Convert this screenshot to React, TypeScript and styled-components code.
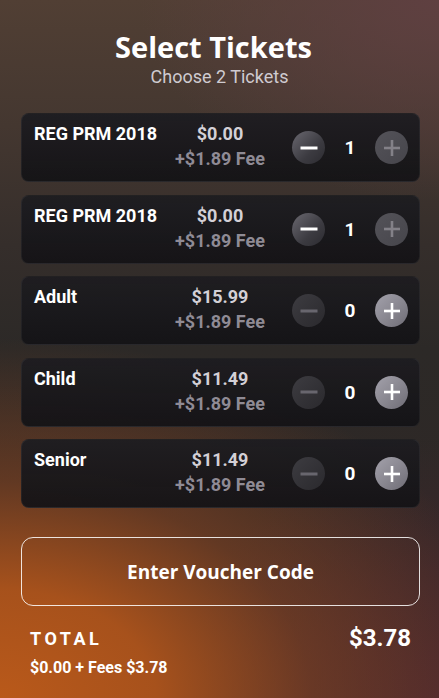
import React, { useState } from 'react';
import styled, { createGlobalStyle } from 'styled-components';

const GlobalStyle = createGlobalStyle`
  html, body {
    margin: 0;
    padding: 0;
  }
  body {
    font-family: Roboto, "Liberation Sans", sans-serif;
    color: #fff;
  }
`;

type Ticket = {
  name: string;
  price: string;
  fee: string;
  qty: number;
};

const tickets: Ticket[] = [
  { name: 'REG PRM 2018', price: '$0.00', fee: '+$1.89 Fee', qty: 1 },
  { name: 'REG PRM 2018', price: '$0.00', fee: '+$1.89 Fee', qty: 1 },
  { name: 'Adult', price: '$15.99', fee: '+$1.89 Fee', qty: 0 },
  { name: 'Child', price: '$11.49', fee: '+$1.89 Fee', qty: 0 },
  { name: 'Senior', price: '$11.49', fee: '+$1.89 Fee', qty: 0 },
];

const MAX = 2;

export default function App() {
  const [items] = useState(tickets);

  return (
    <>
      <GlobalStyle />
      <Page>
        <Header>
          <Title>Select Tickets</Title>
          <Subtitle>Choose {MAX} Tickets</Subtitle>
        </Header>
        <List>
          {items.map((t, i) => (
            <Card key={i}>
              <Name>{t.name}</Name>
              <PriceCol>
                <Price>{t.price}</Price>
                <Fee>{t.fee}</Fee>
              </PriceCol>
              <Controls>
                <RoundButton $variant={t.qty > 0 ? 'active' : 'off'}>
                  <svg width="18" height="18" viewBox="0 0 18 18">
                    <line x1="0.5" y1="9" x2="17.5" y2="9" stroke="currentColor" strokeWidth="3" />
                  </svg>
                </RoundButton>
                <Count>{t.qty}</Count>
                <RoundButton $variant={t.qty > 0 ? 'disabled' : 'light'}>
                  <svg width="18" height="18" viewBox="0 0 18 18">
                    <line x1="1" y1="9" x2="17" y2="9" stroke="currentColor" strokeWidth="2.6" />
                    <line x1="9" y1="1" x2="9" y2="17" stroke="currentColor" strokeWidth="2.6" />
                  </svg>
                </RoundButton>
              </Controls>
            </Card>
          ))}
        </List>
        <VoucherButton>Enter Voucher Code</VoucherButton>
        <Totals>
          <div>
            <TotalLabel>TOTAL</TotalLabel>
            <TotalDetail>$0.00 + Fees $3.78</TotalDetail>
          </div>
          <TotalAmount>$3.78</TotalAmount>
        </Totals>
      </Page>
    </>
  );
}

const Page = styled.div`
  width: 439px;
  height: 698px;
  box-sizing: border-box;
  padding: 29px 19px 0 21px;
  overflow: hidden;
  background:
    radial-gradient(ellipse 520px 360px at 0% 100%, #b9591a 0%, rgba(174, 84, 27, 0.94) 30%, rgba(140, 70, 32, 0.55) 60%, rgba(60, 40, 35, 0) 100%),
    radial-gradient(ellipse 260px 260px at 100% 100%, #46262f 0%, rgba(70, 38, 47, 0) 100%),
    radial-gradient(ellipse 300px 200px at 100% 0%, #5f4041 0%, rgba(95, 64, 65, 0) 100%),
    linear-gradient(to bottom, #513f34 0%, #443730 18%, #352e2b 35%, #2c2927 50%, #2e2826 70%, #35282a 100%);
`;

const Header = styled.div`
  display: flex;
  flex-direction: column;
  align-items: center;
  padding-right: 2px;
`;

const Title = styled.h1`
  margin: 0;
  font-family: "Open Sans", Lato, sans-serif;
  font-weight: 700;
  font-size: 29px;
  line-height: 36px;
  color: #fff;
  margin-right: 12px;
`;

const Subtitle = styled.div`
  margin-top: 2px;
  font-size: 18px;
  line-height: 20px;
  color: #cfcbd0;
`;

const List = styled.div`
  display: flex;
  flex-direction: column;
  gap: 12.5px;
  margin-top: 26px;
`;

const Card = styled.div`
  height: 69px;
  box-sizing: border-box;
  border-radius: 8px;
  border: 1px solid rgba(255, 255, 255, 0.05);
  background: linear-gradient(to bottom, rgba(30, 29, 33, 0.96), rgba(20, 19, 22, 0.94));
  display: grid;
  grid-template-columns: 131px 110px 1fr;
  align-items: start;
  padding: 0 11px 0 12px;
`;

const Name = styled.div`
  padding-top: 9px;
  font-size: 18px;
  font-weight: 700;
  line-height: 22px;
  color: #fff;
  white-space: nowrap;
`;

const PriceCol = styled.div`
  padding-top: 9px;
  display: flex;
  flex-direction: column;
  align-items: center;
  gap: 3px;
  font-weight: 700;
  font-size: 18px;
  line-height: 22px;
`;

const Price = styled.div`
  color: #d3d0d6;
`;

const Fee = styled.div`
  color: #8f8b95;
`;

const Controls = styled.div`
  align-self: center;
  display: flex;
  align-items: center;
  justify-content: flex-end;
`;

type Variant = 'active' | 'off' | 'light' | 'disabled';

const variantBg: Record<Variant, string> = {
  active: 'linear-gradient(135deg, #6a6870 0%, #3c3b41 60%, #2c2b30 100%)',
  off: 'linear-gradient(135deg, #3d3c41 0%, #2a292d 100%)',
  light: 'linear-gradient(135deg, #a3a1ab 0%, #88868f 55%, #6e6c75 100%)',
  disabled: 'linear-gradient(135deg, #545359 0%, #46454b 100%)',
};

const variantFg: Record<Variant, string> = {
  active: '#ffffff',
  off: '#68666e',
  light: '#ffffff',
  disabled: '#838188',
};

const RoundButton = styled.button<{ $variant: Variant }>`
  width: 33px;
  height: 33px;
  border-radius: 50%;
  border: none;
  padding: 0;
  display: flex;
  align-items: center;
  justify-content: center;
  background: ${(p) => variantBg[p.$variant]};
  color: ${(p) => variantFg[p.$variant]};
  cursor: pointer;
`;

const Count = styled.span`
  width: 50px;
  text-align: center;
  font-size: 19px;
  font-weight: 700;
  color: #fff;
`;

const VoucherButton = styled.button`
  margin-top: 29px;
  width: 100%;
  height: 69px;
  border-radius: 12px;
  border: 1px solid rgba(255, 255, 255, 0.85);
  background: transparent;
  color: #fff;
  font-family: "Open Sans", Lato, sans-serif;
  font-weight: 700;
  font-size: 19px;
`;

const Totals = styled.div`
  display: flex;
  justify-content: space-between;
  align-items: flex-start;
  padding: 22px 9px 0 9px;
`;

const TotalLabel = styled.div`
  font-size: 18px;
  font-weight: 700;
  letter-spacing: 3.5px;
  line-height: 22px;
`;

const TotalDetail = styled.div`
  margin-top: 9px;
  font-size: 16px;
  font-weight: 700;
  line-height: 18px;
`;

const TotalAmount = styled.div`
  font-size: 24px;
  font-weight: 700;
  line-height: 24px;
  margin-top: -2px;
`;
